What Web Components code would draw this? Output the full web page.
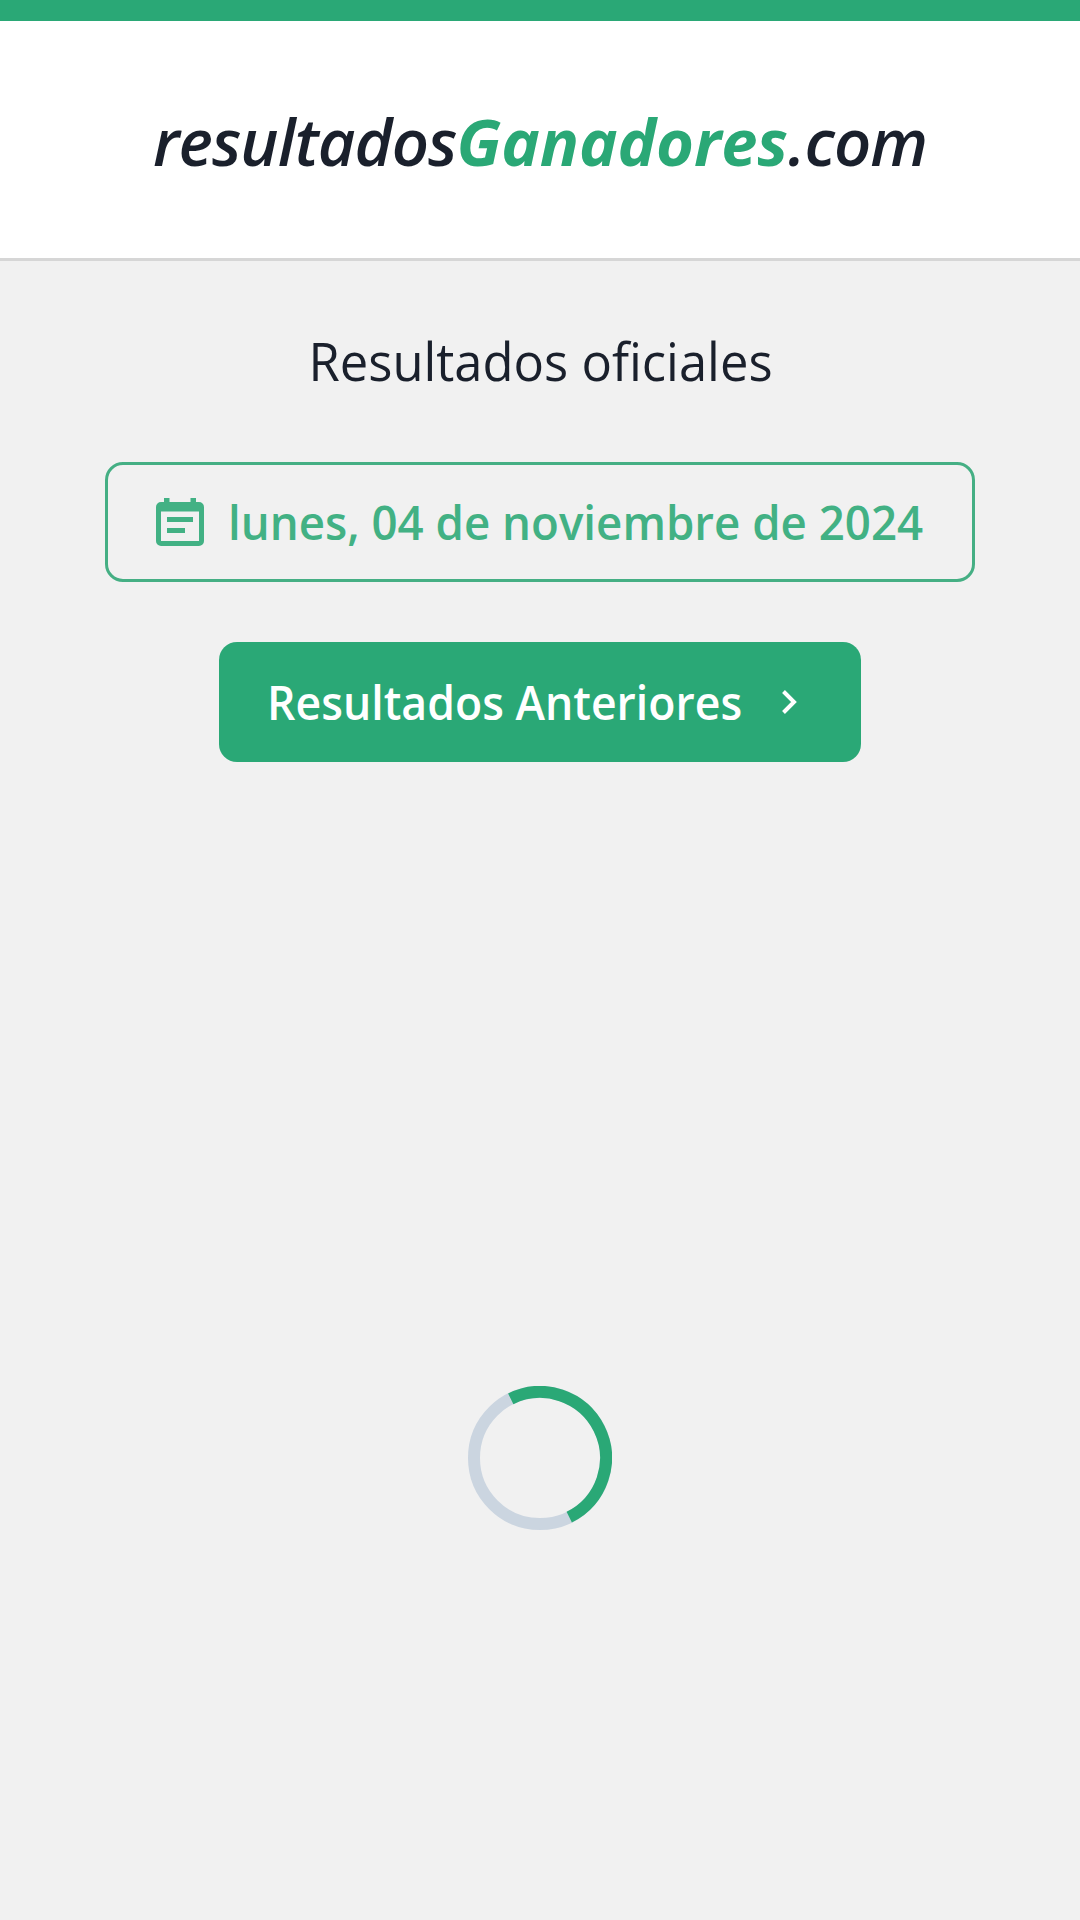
<!DOCTYPE html>
<html lang="es">
<head>
<meta charset="UTF-8">
<meta name="viewport" content="width=device-width, initial-scale=1">
<title>resultadosGanadores.com</title>
<style>
    body {
        margin: 0;
        background: #f1f1f1;
        color: #1a202c;
        font-family: "Open Sans", "Noto Sans", sans-serif;
        --primary: #2aa876;
        --track: #cbd5e0;
    }
</style>
</head>
<body>
<results-page>
    <site-header slot="header">resultados<b>Ganadores</b>.com</site-header>
    <span slot="title">Resultados oficiales</span>
    <date-badge>lunes, 04 de noviembre de 2024</date-badge>
    <nav-button>Resultados Anteriores</nav-button>
    <loading-spinner slot="loader"></loading-spinner>
</results-page>

<script>
class SiteHeader extends HTMLElement {
    constructor() {
        super();
        this.attachShadow({ mode: 'open' });
    }

    connectedCallback() {
        this.shadowRoot.innerHTML = `
        <style>
            :host {
                display: flex;
                justify-content: center;
                box-sizing: border-box;
                height: 261px;
                padding-top: 75px;
                background: #fff;
                border-top: 21px solid var(--primary);
                border-bottom: 3px solid #d6d6d6;
            }
            .logo {
                font-size: 65px;
                line-height: 90px;
                font-style: italic;
                font-weight: 600;
                letter-spacing: -0.95px;
                white-space: nowrap;
            }
            ::slotted(b) {
                color: var(--primary);
                font-weight: 750;
                letter-spacing: -0.1px;
            }
        </style>
        <div class="logo"><slot></slot></div>
        `;
    }
}

class DateBadge extends HTMLElement {
    constructor() {
        super();
        this.attachShadow({ mode: 'open' });
    }

    connectedCallback() {
        this.shadowRoot.innerHTML = `
        <style>
            :host {
                display: flex;
                align-items: center;
                box-sizing: border-box;
                width: 870px;
                height: 120px;
                padding-left: 48px;
                border: 3px solid #45af84;
                border-radius: 18px;
                color: #42b184;
                font-size: 47.6px;
                font-weight: 600;
                line-height: 72px;
                white-space: nowrap;
            }
            svg {
                flex: none;
                width: 48px;
                height: 48px;
                margin-right: 24px;
            }
            span {
                transform: scaleX(0.959);
                transform-origin: left;
            }
        </style>
        <svg viewBox="0 0 48 48" fill="currentColor">
            <path fill-rule="evenodd" d="M8 0h5.500v4h21V0H40v4h3a5 5 0 0 1 5 5v34a5 5 0 0 1-5 5H5a5 5 0 0 1-5-5V9a5 5 0 0 1 5-5h3zM5 13.500V43h38V13.500z"/>
            <path d="M11 19h26v5H11zM11 30h18v5H11z"/>
        </svg>
        <span><slot></slot></span>
        `;
    }
}

class NavButton extends HTMLElement {
    constructor() {
        super();
        this.attachShadow({ mode: 'open' });
    }

    connectedCallback() {
        this.shadowRoot.innerHTML = `
        <style>
            :host {
                display: block;
            }
            button {
                display: flex;
                align-items: center;
                justify-content: space-between;
                width: 642px;
                height: 120px;
                padding: 0 60px 0 48px;
                border: 0;
                border-radius: 18px;
                background: var(--primary);
                color: #fff;
                font: 600 47.6px/72px "Open Sans", "Noto Sans", sans-serif;
                white-space: nowrap;
            }
            span {
                transform: scaleX(0.937);
                transform-origin: left;
            }
            svg {
                flex: none;
                width: 24px;
                height: 24px;
            }
        </style>
        <button type="button">
            <span><slot></slot></span>
            <svg viewBox="0 0 24 24" fill="none" stroke="currentColor" stroke-width="4">
                <path d="M6.500 1.500L17 12 6.500 22.500"/>
            </svg>
        </button>
        `;
    }
}

class LoadingSpinner extends HTMLElement {
    constructor() {
        super();
        this.attachShadow({ mode: 'open' });
    }

    connectedCallback() {
        this.shadowRoot.innerHTML = `
        <style>
            :host {
                display: block;
                width: 144px;
                height: 144px;
            }
            svg {
                display: block;
                fill: none;
                stroke-width: 12;
            }
        </style>
        <svg width="144" height="144" viewBox="0 0 144 144">
            <circle cx="72" cy="72" r="66" stroke="var(--track)"/>
            <path d="M72 6a66 66 0 0 1 0 132" stroke="var(--primary)" transform="rotate(-26.300 72 72)"/>
        </svg>
        `;
    }
}

class ResultsPage extends HTMLElement {
    constructor() {
        super();
        this.attachShadow({ mode: 'open' });
    }

    connectedCallback() {
        this.shadowRoot.innerHTML = `
        <style>
            :host {
                display: flex;
                flex-direction: column;
                height: 1920px;
                overflow: hidden;
            }
            main {
                display: flex;
                flex-direction: column;
                align-items: center;
                gap: 60px;
                padding-top: 64px;
            }
            h1 {
                margin: 0 0 5px;
                font-size: 53px;
                font-weight: 400;
                line-height: 72px;
                white-space: nowrap;
                transform: scaleX(0.957);
            }
            .loader {
                display: flex;
                justify-content: center;
                padding-top: 624px;
            }
        </style>
        <slot name="header"></slot>
        <main>
            <h1><slot name="title"></slot></h1>
            <slot></slot>
        </main>
        <div class="loader"><slot name="loader"></slot></div>
        `;
    }
}

customElements.define('site-header', SiteHeader);
customElements.define('date-badge', DateBadge);
customElements.define('nav-button', NavButton);
customElements.define('loading-spinner', LoadingSpinner);
customElements.define('results-page', ResultsPage);
</script>
</body>
</html>
